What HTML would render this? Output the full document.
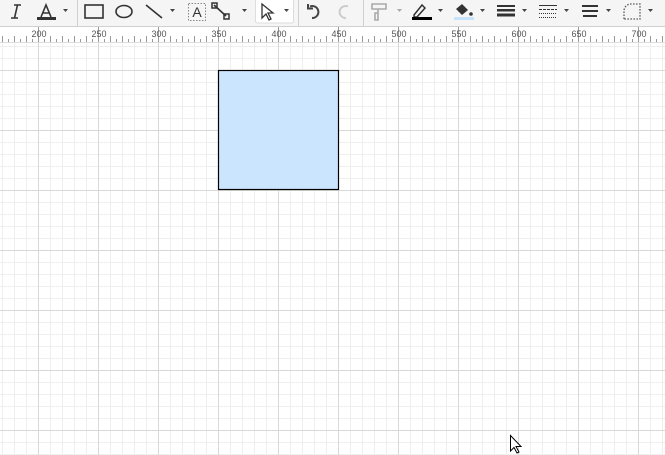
<!DOCTYPE html>
<html><head><meta charset="utf-8"><style>
html,body{margin:0;padding:0;width:665px;height:455px;overflow:hidden;background:#fff;font-family:"Liberation Sans",sans-serif}
svg{display:block}
</style></head><body>
<svg width="665" height="455" xmlns="http://www.w3.org/2000/svg">
<defs>
<pattern id="minor" x="2" y="10" width="12" height="12" patternUnits="userSpaceOnUse">
<path d="M0.5 0V12M0 0.5H12" stroke="#efefef" stroke-width="1" fill="none"/>
</pattern>
<pattern id="major" x="38" y="10" width="60" height="60" patternUnits="userSpaceOnUse">
<path d="M0.5 0V60M0 0.5H60" stroke="#d8d8d8" stroke-width="1" fill="none"/>
</pattern>
</defs>
<rect x="0" y="43" width="665" height="412" fill="url(#minor)"/>
<rect x="0" y="43" width="665" height="412" fill="url(#major)"/>
<rect x="0" y="27" width="665" height="16" fill="#fff"/>
<g stroke="#999" stroke-width="1" id="ticks"></g>
<line x1="0" y1="42.5" x2="665" y2="42.5" stroke="#ddd"/>
<g font-size="9" fill="#555" text-anchor="middle">
<text x="39" y="37">200</text><text x="99" y="37">250</text><text x="159" y="37">300</text><text x="219" y="37">350</text><text x="279" y="37">400</text><text x="339" y="37">450</text><text x="399" y="37">500</text><text x="459" y="37">550</text><text x="519" y="37">600</text><text x="579" y="37">650</text><text x="639" y="37">700</text>
</g>
<rect x="0" y="0" width="665" height="27" fill="#f5f5f5"/>
<line x1="0" y1="26.5" x2="665" y2="26.5" stroke="#d0d0d0"/>
<g stroke="#d0d0d0"><line x1="77.5" y1="0" x2="77.5" y2="26"/><line x1="298.5" y1="0" x2="298.5" y2="26"/><line x1="363.5" y1="0" x2="363.5" y2="26"/></g>
<rect x="255.5" y="-1" width="38" height="24" rx="2" fill="#fff" stroke="#ddd"/>
<g fill="none" stroke="#333" stroke-width="1.6">
<path d="M14 5H21M11 18H18M17.5 5L14.5 18" />
<path d="M41 17L46 5L51 17M43 13H49"/>
<rect x="85" y="5" width="18" height="13"/>
<ellipse cx="124" cy="11.5" rx="8" ry="6"/>
<path d="M146 5L162 18"/>
<path d="M214 5L226 16" />
<path d="M310 6.5A6 6 0 1 1 312 18" stroke="#444" stroke-width="2"/>
<path d="M308 4V8.5H313" stroke="#444" stroke-width="2"/>
<path d="M348 6.5A6 6 0 1 0 346 18" stroke="#ccc" stroke-width="2"/>
</g>
<g fill="#333">
<rect x="37" y="17" width="19" height="3"/>
<text x="197" y="17" font-size="14" text-anchor="middle" fill="#333">A</text>
<rect x="212" y="3" width="5" height="5" fill="none" stroke="#333" stroke-width="1.5"/>
<rect x="224" y="14" width="5" height="5" fill="none" stroke="#333" stroke-width="1.5"/>
<path d="M262 4L262 18L266 14L269 20L271 19L268 13L273 13Z" fill="#fff" stroke="#333" stroke-width="1.3"/>
</g>
<rect x="188.5" y="3.5" width="17" height="17" fill="none" stroke="#888" stroke-dasharray="1.5,1.5"/>
<g fill="#444">
<path d="M63 9h5l-2.5 3z"/><path d="M170 9h5l-2.5 3z"/><path d="M242 9h5l-2.5 3z"/><path d="M284 9h5l-2.5 3z"/>
<path d="M397 9h5l-2.5 3z" fill="#aaa"/><path d="M438 9h5l-2.5 3z"/><path d="M480 9h5l-2.5 3z"/><path d="M522 9h5l-2.5 3z"/><path d="M564 9h5l-2.5 3z"/><path d="M606 9h5l-2.5 3z"/><path d="M648 9h5l-2.5 3z"/>
</g>
<path d="M372 4h14v5h-14zM378 9v4h-3v7h3v-7" fill="none" stroke="#aaa" stroke-width="1.6"/>
<path d="M414 15l8-10l3 3l-8 9h-3z" fill="none" stroke="#333" stroke-width="1.5"/>
<rect x="412" y="17" width="20" height="3" fill="#000"/>
<path d="M456 9l6-5l6 6l-6 5z" fill="#333"/><circle cx="471" cy="14" r="1.8" fill="#333"/>
<rect x="454" y="17" width="20" height="3" fill="#c9e2fb"/>
<g fill="#333"><rect x="497" y="5" width="18" height="2"/><rect x="497" y="9" width="18" height="2.5"/><rect x="497" y="13.5" width="18" height="3"/></g>
<g stroke="#333" stroke-width="1"><line x1="539" y1="5.5" x2="557" y2="5.5"/><line x1="539" y1="9.5" x2="557" y2="9.5" stroke-dasharray="3,1"/><line x1="539" y1="13.5" x2="557" y2="13.5" stroke-dasharray="1,1"/><line x1="539" y1="17.5" x2="557" y2="17.5" stroke-dasharray="1,1"/></g>
<path d="M582 6h16M582 11h16M583 16h14" stroke="#333" stroke-width="2" fill="none"/>
<path d="M624 19V11a7 7 0 0 1 7-7h9v15z" fill="none" stroke="#555" stroke-width="1.3" stroke-dasharray="1.5,1.5"/>
<rect x="218.5" y="70.5" width="120" height="119" fill="#cce5ff" stroke="#000" stroke-width="1.2"/>
<path d="M510.5 435.5V451l3.5-3.5l3 5.5l2-1l-3-5.5h5z" fill="#fff" stroke="#000" stroke-width="1"/>
</svg>
<script>
var g=document.getElementById('ticks'),s='';
for(var x=2;x<665;x+=6){var k=Math.round((x-38)/6);var h=((k%10)+10)%10==0?16:(((k%2)+2)%2==0?7:4);s+='<line x1="'+(x+0.5)+'" y1="'+(43-h)+'" x2="'+(x+0.5)+'" y2="43"/>';}
g.innerHTML=s;
</script>
</body></html>
